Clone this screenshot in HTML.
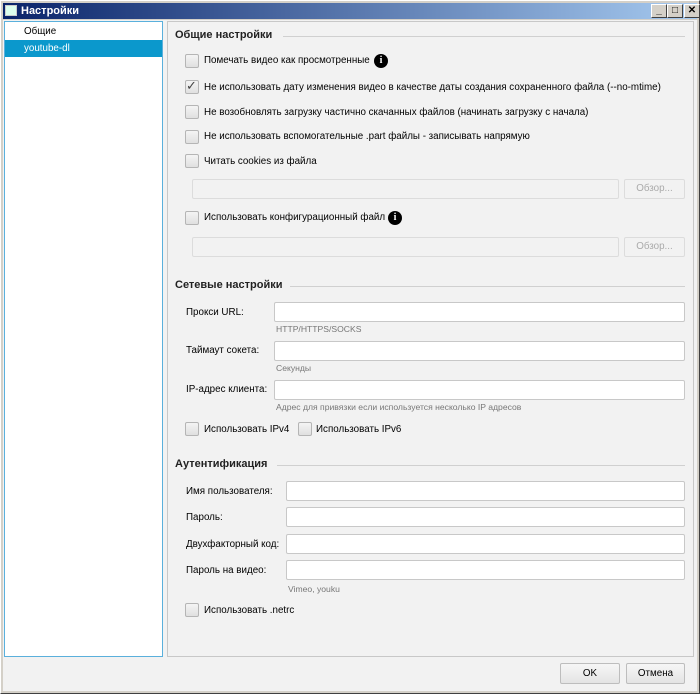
<!DOCTYPE html>
<html><head><meta charset="utf-8"><style>
*{margin:0;padding:0;box-sizing:border-box}
body{width:700px;height:694px;background:#d4d0c8;font-family:"Liberation Sans",sans-serif;font-size:9.8px;color:#000;position:relative;overflow:hidden;white-space:nowrap}
.a{position:absolute}
#win{left:0;top:0;width:700px;height:694px;border:1px solid #fff;border-right-color:#404040;border-bottom-color:#404040}
#title{left:3px;top:3px;width:694px;height:16px;background:linear-gradient(to right,#0a246a,#a6caf0);color:#fff;font-weight:bold;font-size:11px;line-height:16px;padding-left:18px}
#inner{left:3px;top:20px;width:694px;height:671px;background:#f2f2f2}
#list{left:4px;top:21px;width:159px;height:636px;background:#fff;border:1px solid #5ab0dc}
#panel{left:167px;top:21px;width:527px;height:636px;background:#f2f2f2;border:1px solid #c8c8c8}
.h{font-weight:bold;font-size:11px;color:#222}
.line{height:1px;background:#d0d0d0}
.cb{width:14px;height:14px;border:1px solid #b5b5b5;border-radius:2px;background:linear-gradient(#f4f4f4,#e0e0e0)}
.in{background:#fff;border:1px solid #c8c8c8;border-radius:2px;height:20px}
.dis{background:#f2f2f2;border:1px solid #dcdcdc;border-radius:2px;height:20px}
.btn{border:1px solid #bdbdbd;border-radius:2px;background:linear-gradient(#f6f6f6,#e4e4e4);text-align:center;line-height:19px;height:21px}
.hint{color:#777;font-size:8.6px}
.info{width:14px;height:14px;border-radius:50%;background:#000;color:#fff;font-weight:bold;font-size:10px;text-align:center;line-height:14px;font-family:"Liberation Serif",serif}
.wb{width:16px;height:14px;background:#d4d0c8;border:1px solid #fff;border-right-color:#404040;border-bottom-color:#404040;font-size:10px;font-weight:bold;text-align:center;line-height:12px;color:#000}
</style></head><body>
<div class="a" id="win"></div>
<div class="a" id="title">Настройки</div>
<div class="a" style="left:5px;top:5px;width:12px;height:11px;background:#dfe;border:1px solid #ccc"></div>
<div class="a wb" style="left:651px;top:4px">_</div>
<div class="a wb" style="left:667px;top:4px">□</div>
<div class="a wb" style="left:684px;top:4px">✕</div>
<div class="a" id="inner"></div>
<div class="a" id="list"></div>
<div class="a" style="left:24px;top:26px">Общие</div>
<div class="a" style="left:5px;top:40px;width:157px;height:17px;background:#0b98cc;color:#fff;padding-left:19px;line-height:17px">youtube-dl</div>
<div class="a" id="panel"></div>

<div class="a h" style="left:175px;top:29px">Общие настройки</div>
<div class="a line" style="left:283px;top:36px;width:402px"></div>

<div class="a cb" style="left:185px;top:54px"></div><div class="a" style="left:204px;top:55px">Помечать видео как просмотренные</div><div class="a info" style="left:374px;top:54px">i</div>
<div class="a cb" style="left:185px;top:80px"></div><div class="a" style="left:186px;top:78px;font-size:13px;color:#444">✓</div><div class="a" style="left:204px;top:82px">Не использовать дату изменения видео в качестве даты создания сохраненного файла (--no-mtime)</div>
<div class="a cb" style="left:185px;top:105px"></div><div class="a" style="left:204px;top:107px">Не возобновлять загрузку частично скачанных файлов (начинать загрузку с начала)</div>
<div class="a cb" style="left:185px;top:130px"></div><div class="a" style="left:204px;top:131px">Не использовать вспомогательные .part файлы - записывать напрямую</div>
<div class="a cb" style="left:185px;top:154px"></div><div class="a" style="left:204px;top:156px">Читать cookies из файла</div>
<div class="a dis" style="left:192px;top:179px;width:427px"></div>
<div class="a dis" style="left:624px;top:179px;width:61px;color:#aaa;text-align:center;line-height:18px">Обзор...</div>
<div class="a cb" style="left:185px;top:211px"></div><div class="a" style="left:204px;top:212px">Использовать конфигурационный файл</div><div class="a info" style="left:388px;top:211px">i</div>
<div class="a dis" style="left:192px;top:237px;width:427px"></div>
<div class="a dis" style="left:624px;top:237px;width:61px;color:#aaa;text-align:center;line-height:18px">Обзор...</div>

<div class="a h" style="left:175px;top:279px">Сетевые настройки</div>
<div class="a line" style="left:290px;top:286px;width:395px"></div>
<div class="a" style="left:186px;top:307px">Прокси URL:</div><div class="a in" style="left:274px;top:302px;width:411px"></div><div class="a hint" style="left:276px;top:324px">HTTP/HTTPS/SOCKS</div>
<div class="a" style="left:186px;top:345px">Таймаут сокета:</div><div class="a in" style="left:274px;top:341px;width:411px"></div><div class="a hint" style="left:276px;top:363px">Секунды</div>
<div class="a" style="left:186px;top:384px">IP-адрес клиента:</div><div class="a in" style="left:274px;top:380px;width:411px"></div><div class="a hint" style="left:276px;top:402px">Адрес для привязки если используется несколько IP адресов</div>
<div class="a cb" style="left:185px;top:422px"></div><div class="a" style="left:204px;top:424px">Использовать IPv4</div>
<div class="a cb" style="left:298px;top:422px"></div><div class="a" style="left:316px;top:424px">Использовать IPv6</div>

<div class="a h" style="left:175px;top:458px">Аутентификация</div>
<div class="a line" style="left:277px;top:465px;width:408px"></div>
<div class="a" style="left:186px;top:486px">Имя пользователя:</div><div class="a in" style="left:286px;top:481px;width:399px"></div>
<div class="a" style="left:186px;top:512px">Пароль:</div><div class="a in" style="left:286px;top:507px;width:399px"></div>
<div class="a" style="left:186px;top:539px">Двухфакторный код:</div><div class="a in" style="left:286px;top:534px;width:399px"></div>
<div class="a" style="left:186px;top:565px">Пароль на видео:</div><div class="a in" style="left:286px;top:560px;width:399px"></div><div class="a hint" style="left:288px;top:584px">Vimeo, youku</div>
<div class="a cb" style="left:185px;top:603px"></div><div class="a" style="left:204px;top:605px">Использовать .netrc</div>

<div class="a btn" style="left:560px;top:663px;width:60px">OK</div>
<div class="a btn" style="left:626px;top:663px;width:59px">Отмена</div>
</body></html>
